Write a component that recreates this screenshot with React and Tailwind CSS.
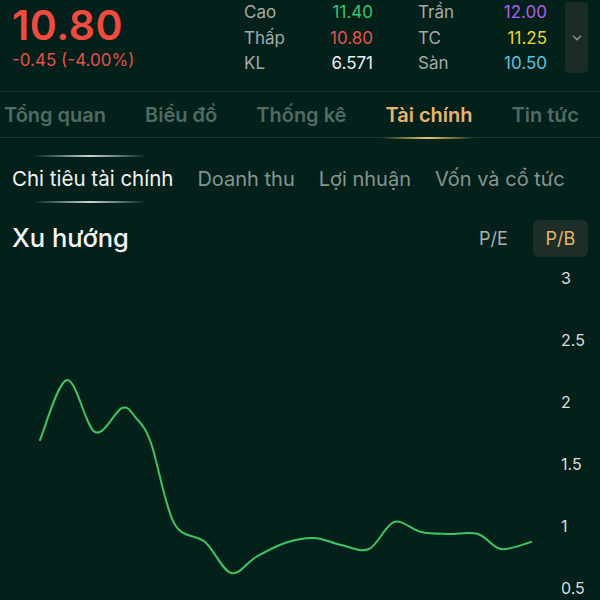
import React from "react";
import { ChevronDown } from "lucide-react";

const stats = [
  [
    { label: "Cao", value: "11.40", color: "text-[#3ec46d]" },
    { label: "Thấp", value: "10.80", color: "text-[#e5534b]" },
    { label: "KL", value: "6.571", color: "text-[#f2f2f2]" },
  ],
  [
    { label: "Trần", value: "12.00", color: "text-[#b25de8]" },
    { label: "TC", value: "11.25", color: "text-[#e8da2c]" },
    { label: "Sàn", value: "10.50", color: "text-[#5cc6df]" },
  ],
];

const tabs = ["Tổng quan", "Biểu đồ", "Thống kê", "Tài chính", "Tin tức"];
const subTabs = ["Chi tiêu tài chính", "Doanh thu", "Lợi nhuận", "Vốn và cổ tức"];
const yLabels = ["3", "2.5", "2", "1.5", "1", "0.5"];

// traced from the P/B trend, svg coords (top-left of chart area)
const points = [
  [40, 175], [67, 115], [95, 167], [122, 143], [136, 153], [151, 178],
  [174, 258], [205, 277], [231, 308], [256, 292], [285, 278], [314, 273],
  [341, 280], [369, 284], [394, 257], [421, 267], [448, 269], [478, 269],
  [501, 284], [531, 277],
];

function smoothPath(pts) {
  let d = `M${pts[0][0]},${pts[0][1]}`;
  for (let i = 0; i < pts.length - 1; i++) {
    const p0 = pts[i - 1] || pts[i];
    const p1 = pts[i];
    const p2 = pts[i + 1];
    const p3 = pts[i + 2] || p2;
    const c1x = p1[0] + (p2[0] - p0[0]) / 6;
    const c1y = p1[1] + (p2[1] - p0[1]) / 6;
    const c2x = p2[0] - (p3[0] - p1[0]) / 6;
    const c2y = p2[1] - (p3[1] - p1[1]) / 6;
    d += ` C${c1x},${c1y} ${c2x},${c2y} ${p2[0]},${p2[1]}`;
  }
  return d;
}

function StatBlock({ rows }) {
  return (
    <div className="flex flex-col w-[129px]">
      {rows.map((r) => (
        <div key={r.label} className="flex justify-between leading-[25.5px] text-[17px]">
          <span className="text-[#a3aca9]">{r.label}</span>
          <span className={r.color}>{r.value}</span>
        </div>
      ))}
    </div>
  );
}

export default function App() {
  return (
    <div
      className="w-[600px] h-[600px] overflow-hidden bg-[#03201a] text-white"
      style={{ fontFamily: "Inter, 'Noto Sans', sans-serif" }}
    >
      {/* header */}
      <div className="flex h-[92px] border-b border-[#17362c]">
        <div className="w-[244px] pl-3 pt-[3px]">
          <div className="text-[41px] font-semibold leading-[45px] tracking-[0.5px] text-[#f04b3f]">10.80</div>
          <div className="text-[17px] leading-[20px] text-[#e35048] mt-[2px]">-0.45 (-4.00%)</div>
        </div>
        <div className="flex gap-[45px]">
          <StatBlock rows={stats[0]} />
          <StatBlock rows={stats[1]} />
        </div>
        <div className="ml-[18px] mt-[2px] w-[23px] h-[71px] rounded-[4px] bg-[#1b2b26] flex items-center justify-center">
          <ChevronDown size={14} strokeWidth={2.5} className="text-[#8c9a96]" />
        </div>
      </div>

      {/* main tabs */}
      <div className="flex h-[46px] items-center gap-[39px] pl-1 border-b border-[#17362c]">
        {tabs.map((t) => (
          <div
            key={t}
            className={
              t === "Tài chính"
                ? "relative text-[20px] leading-[30px] font-semibold text-[#eab56b]"
                : "text-[20px] leading-[30px] font-semibold text-[#4f6b63]"
            }
          >
            {t}
            {t === "Tài chính" && (
              <div className="absolute left-[-4px] right-[-2px] top-[37px] h-[2px] bg-gradient-to-r from-transparent via-[#e6c766] to-transparent" />
            )}
          </div>
        ))}
      </div>

      {/* sub tabs */}
      <div className="flex gap-[24px] pl-3 pt-[17px]">
        {subTabs.map((t, i) => (
          <div key={t} className="flex flex-col">
            <div
              className={
                i === 0
                  ? "h-[2px] w-[114px] ml-[21px] bg-gradient-to-r from-transparent via-[#c9d8cf] to-transparent"
                  : "h-[2px]"
              }
            />
            <div
              className={
                i === 0
                  ? "text-[20.5px] leading-[44px] text-[#f3f3f3]"
                  : "text-[20px] leading-[44px] text-[#859690]"
              }
            >
              {t}
            </div>
            <div
              className={
                i === 0
                  ? "h-[2px] w-[114px] ml-[21px] bg-gradient-to-r from-transparent via-[#c9d8cf] to-transparent"
                  : "h-[2px]"
              }
            />
          </div>
        ))}
      </div>

      {/* trend header */}
      <div className="flex items-center justify-between pl-3 pr-3 pt-[16px] pb-[8px]">
        <div className="text-[25.5px] font-medium text-[#f5f5f5]">Xu hướng</div>
        <div className="flex gap-[12px]">
          <div className="w-[55px] h-[37px] flex items-center justify-center text-[18px] text-[#a7b2ae]">P/E</div>
          <div className="w-[55px] h-[37px] rounded-[6px] bg-[#1d2d28] flex items-center justify-center text-[18px] text-[#e9b46a]">
            P/B
          </div>
        </div>
      </div>

      {/* chart */}
      <div className="flex h-[335px]">
        <svg width="561" height="335" viewBox="0 0 561 335" className="shrink-0">
          <path
            d={smoothPath(points)}
            fill="none"
            stroke="#40c463"
            strokeWidth="2"
            strokeLinejoin="round"
            strokeLinecap="round"
          />
        </svg>
        <div className="flex flex-col gap-[42px] pt-[3px]">
          {yLabels.map((l) => (
            <div key={l} className="text-[16px] leading-[20px] text-[#dedede]">
              {l}
            </div>
          ))}
        </div>
      </div>
    </div>
  );
}
